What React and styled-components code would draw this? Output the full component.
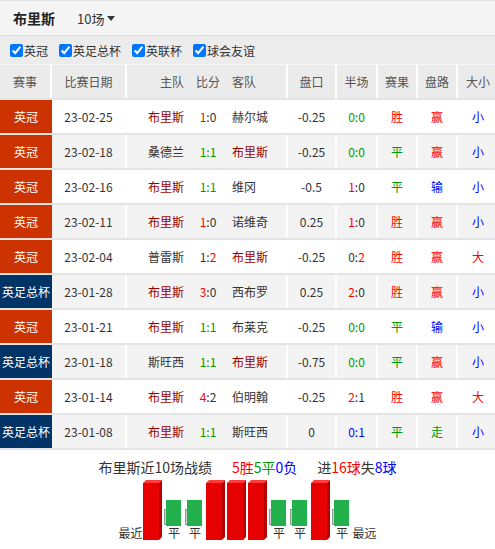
import { createGlobalStyle, styled } from "styled-components";

const GlobalStyle = createGlobalStyle`
  body {
    margin: 0;
    background: #fff;
    font-family: "Noto Sans CJK SC", "Open Sans", sans-serif;
    color: #333;
  }
`;

const TEAM = "布里斯";
const RED = "#ff0000";
const GREEN = "#009900";
const BLUE = "#0000ff";
const COLS = "52px 75px 63px 36px 62px 49px 41px 40px 40px 40px";

const matches = [
  { lg: "英冠", date: "23-02-25", home: "布里斯", score: "1:0", away: "赫尔城", hc: "-0.25", half: "0:0", res: "胜", pan: "赢", ou: "小" },
  { lg: "英冠", date: "23-02-18", home: "桑德兰", score: "1:1", away: "布里斯", hc: "-0.25", half: "0:0", res: "平", pan: "赢", ou: "小" },
  { lg: "英冠", date: "23-02-16", home: "布里斯", score: "1:1", away: "维冈", hc: "-0.5", half: "1:0", res: "平", pan: "输", ou: "小" },
  { lg: "英冠", date: "23-02-11", home: "布里斯", score: "1:0", away: "诺维奇", hc: "0.25", half: "1:0", res: "胜", pan: "赢", ou: "小" },
  { lg: "英冠", date: "23-02-04", home: "普雷斯", score: "1:2", away: "布里斯", hc: "-0.25", half: "0:2", res: "胜", pan: "赢", ou: "大" },
  { lg: "英足总杯", date: "23-01-28", home: "布里斯", score: "3:0", away: "西布罗", hc: "0.25", half: "2:0", res: "胜", pan: "赢", ou: "小" },
  { lg: "英冠", date: "23-01-21", home: "布里斯", score: "1:1", away: "布莱克", hc: "-0.25", half: "0:0", res: "平", pan: "输", ou: "小" },
  { lg: "英足总杯", date: "23-01-18", home: "斯旺西", score: "1:1", away: "布里斯", hc: "-0.75", half: "0:0", res: "平", pan: "赢", ou: "小" },
  { lg: "英冠", date: "23-01-14", home: "布里斯", score: "4:2", away: "伯明翰", hc: "-0.25", half: "2:1", res: "胜", pan: "赢", ou: "大" },
  { lg: "英足总杯", date: "23-01-08", home: "布里斯", score: "1:1", away: "斯旺西", hc: "0", half: "0:1", res: "平", pan: "走", ou: "小" },
];

const resultColor = { 胜: RED, 平: GREEN, 负: BLUE, 赢: RED, 输: BLUE, 走: GREEN, 大: RED, 小: BLUE };

const Page = styled.div`
  width: 495px;
  overflow: hidden;
`;

const TopBar = styled.div`
  box-sizing: border-box;
  height: 36px;
  display: flex;
  align-items: center;
  gap: 22px;
  padding: 0 13px;
  background: #f5f5f5;
  border-top: 1px solid #e3e3e3;
  border-bottom: 1px solid #dcdcdc;
`;

const TeamTitle = styled.div`
  font-size: 14px;
  font-weight: bold;
  color: #222;
`;

const CountPicker = styled.div`
  display: flex;
  align-items: center;
  gap: 3px;
  font-size: 13px;
  color: #333;
`;

const Caret = styled.span`
  width: 0;
  height: 0;
  border-left: 4px solid transparent;
  border-right: 4px solid transparent;
  border-top: 5px solid #333;
`;

const FilterBar = styled.div`
  box-sizing: border-box;
  height: 29px;
  display: flex;
  align-items: center;
  gap: 11px;
  padding-left: 10px;
  background: #ececec;
  border-bottom: 1px solid #f7f7f7;
`;

const FilterItem = styled.label`
  display: flex;
  align-items: center;
  gap: 1px;
  font-size: 12px;
  color: #333;

  input {
    margin: 0;
    width: 13px;
    height: 13px;
  }
`;

const Row = styled.div`
  box-sizing: border-box;
  display: grid;
  grid-template-columns: ${COLS};
  height: 35px;
  background: ${(p) => (p.$head ? "#ebebeb" : p.$alt ? "#f3f3f3" : "#fff")};
  border-bottom: 2px solid #e4e4e4;
  font-size: 12px;
`;

const Cell = styled.div`
  display: flex;
  align-items: center;
  justify-content: ${(p) => p.$align || "center"};
  padding: ${(p) => (p.$align === "flex-end" ? "0 6px 0 0" : p.$align === "flex-start" ? "0 0 0 6px" : "0")};
  border-right: ${(p) => (p.$sep ? "2px solid #fff" : "none")};
  color: ${(p) => p.$color || "#333"};
  white-space: nowrap;
  overflow: hidden;
`;

const HeadCell = styled(Cell)`
  color: #555;
`;

const LeagueCell = styled.div`
  display: flex;
  align-items: center;
  justify-content: center;
  background: ${(p) => (p.$cup ? "#003366" : "#cc3300")};
  color: #fff;
  white-space: nowrap;
`;

const Part = styled.span`
  color: ${(p) => p.$color};
`;

const Summary = styled.div`
  display: flex;
  justify-content: center;
  gap: 20px;
  padding-top: 7px;
  line-height: 20px;
  font-size: 14px;
  color: #333;
`;

const Chart = styled.div`
  display: flex;
  justify-content: center;
  align-items: flex-end;
  margin-top: 3px;
  padding-bottom: 8px;
  font-size: 12px;
  line-height: 14px;
  color: #333;
`;

const EndLabel = styled.div`
  width: 24px;
`;

const Slot = styled.div`
  width: 21px;
  display: flex;
  flex-direction: column;
  align-items: flex-start;

  svg {
    display: block;
  }
`;

const DrawLabel = styled.div`
  width: 19px;
  text-align: center;
  padding-left: 1px;
`;

function ScoreText({ score, home }) {
  const goals = score.split(":");
  const mine = home === TEAM ? 0 : 1;
  const a = Number(goals[mine]);
  const b = Number(goals[1 - mine]);
  if (a === b) return <Part $color={GREEN}>{score}</Part>;
  if (a < b) return <Part $color={BLUE}>{score}</Part>;
  return mine === 0 ? (
    <>
      <Part $color={RED}>{goals[0]}</Part>:{goals[1]}
    </>
  ) : (
    <>
      {goals[0]}:<Part $color={RED}>{goals[1]}</Part>
    </>
  );
}

function WinBar() {
  return (
    <svg width="19" height="60" viewBox="0 0 19 60">
      <polygon points="0,3 3,0 19,0 16,3" fill="#ff3b3b" />
      <polygon points="16,3 19,0 19,57 16,60" fill="#b50000" />
      <rect x="0" y="3" width="16" height="57" fill="#e60000" />
    </svg>
  );
}

function DrawBar() {
  return (
    <svg width="19" height="26" viewBox="0 0 19 26">
      <rect x="0.5" y="9.5" width="15" height="15" fill="#cfcfcf" stroke="#999" />
      <rect x="2" y="0" width="15" height="26" fill="#22b14c" />
    </svg>
  );
}

export default function App() {
  const wins = matches.filter((m) => m.res === "胜").length;
  const draws = matches.filter((m) => m.res === "平").length;
  const losses = matches.filter((m) => m.res === "负").length;

  return (
    <Page>
      <GlobalStyle />
      <TopBar>
        <TeamTitle>{TEAM}</TeamTitle>
        <CountPicker>
          10场 <Caret />
        </CountPicker>
      </TopBar>

      <FilterBar>
        {["英冠", "英足总杯", "英联杯", "球会友谊"].map((name) => (
          <FilterItem key={name}>
            <input type="checkbox" defaultChecked />
            {name}
          </FilterItem>
        ))}
      </FilterBar>

      <Row $head>
        <HeadCell $sep>赛事</HeadCell>
        <HeadCell $sep>比赛日期</HeadCell>
        <HeadCell $align="flex-end">主队</HeadCell>
        <HeadCell>比分</HeadCell>
        <HeadCell $align="flex-start" $sep>客队</HeadCell>
        <HeadCell $sep>盘口</HeadCell>
        <HeadCell $sep>半场</HeadCell>
        <HeadCell $sep>赛果</HeadCell>
        <HeadCell $sep>盘路</HeadCell>
        <HeadCell>大小</HeadCell>
      </Row>

      {matches.map((m, i) => (
        <Row key={m.date} $alt={i % 2 === 1}>
          <LeagueCell $cup={m.lg === "英足总杯"}>{m.lg}</LeagueCell>
          <Cell $sep>{m.date}</Cell>
          <Cell $align="flex-end" $color={m.home === TEAM ? "#990000" : "#333"}>
            {m.home}
          </Cell>
          <Cell>
            <ScoreText score={m.score} home={m.home} />
          </Cell>
          <Cell $align="flex-start" $sep $color={m.away === TEAM ? "#990000" : "#333"}>
            {m.away}
          </Cell>
          <Cell $sep>{m.hc}</Cell>
          <Cell $sep>
            <ScoreText score={m.half} home={m.home} />
          </Cell>
          <Cell $sep $color={resultColor[m.res]}>{m.res}</Cell>
          <Cell $sep $color={resultColor[m.pan]}>{m.pan}</Cell>
          <Cell $color={resultColor[m.ou]}>{m.ou}</Cell>
        </Row>
      ))}

      <Summary>
        <span>{TEAM}近10场战绩</span>
        <span>
          <Part $color={RED}>{wins}胜</Part>
          <Part $color={GREEN}>{draws}平</Part>
          <Part $color={BLUE}>{losses}负</Part>
        </span>
        <span>
          进<Part $color={RED}>16球</Part>失<Part $color={BLUE}>8球</Part>
        </span>
      </Summary>

      <Chart>
        <EndLabel>最近</EndLabel>
        {matches.map((m) => (
          <Slot key={m.date}>
            {m.res === "胜" ? (
              <WinBar />
            ) : (
              <>
                <DrawBar />
                <DrawLabel>平</DrawLabel>
              </>
            )}
          </Slot>
        ))}
        <EndLabel>最远</EndLabel>
      </Chart>
    </Page>
  );
}
